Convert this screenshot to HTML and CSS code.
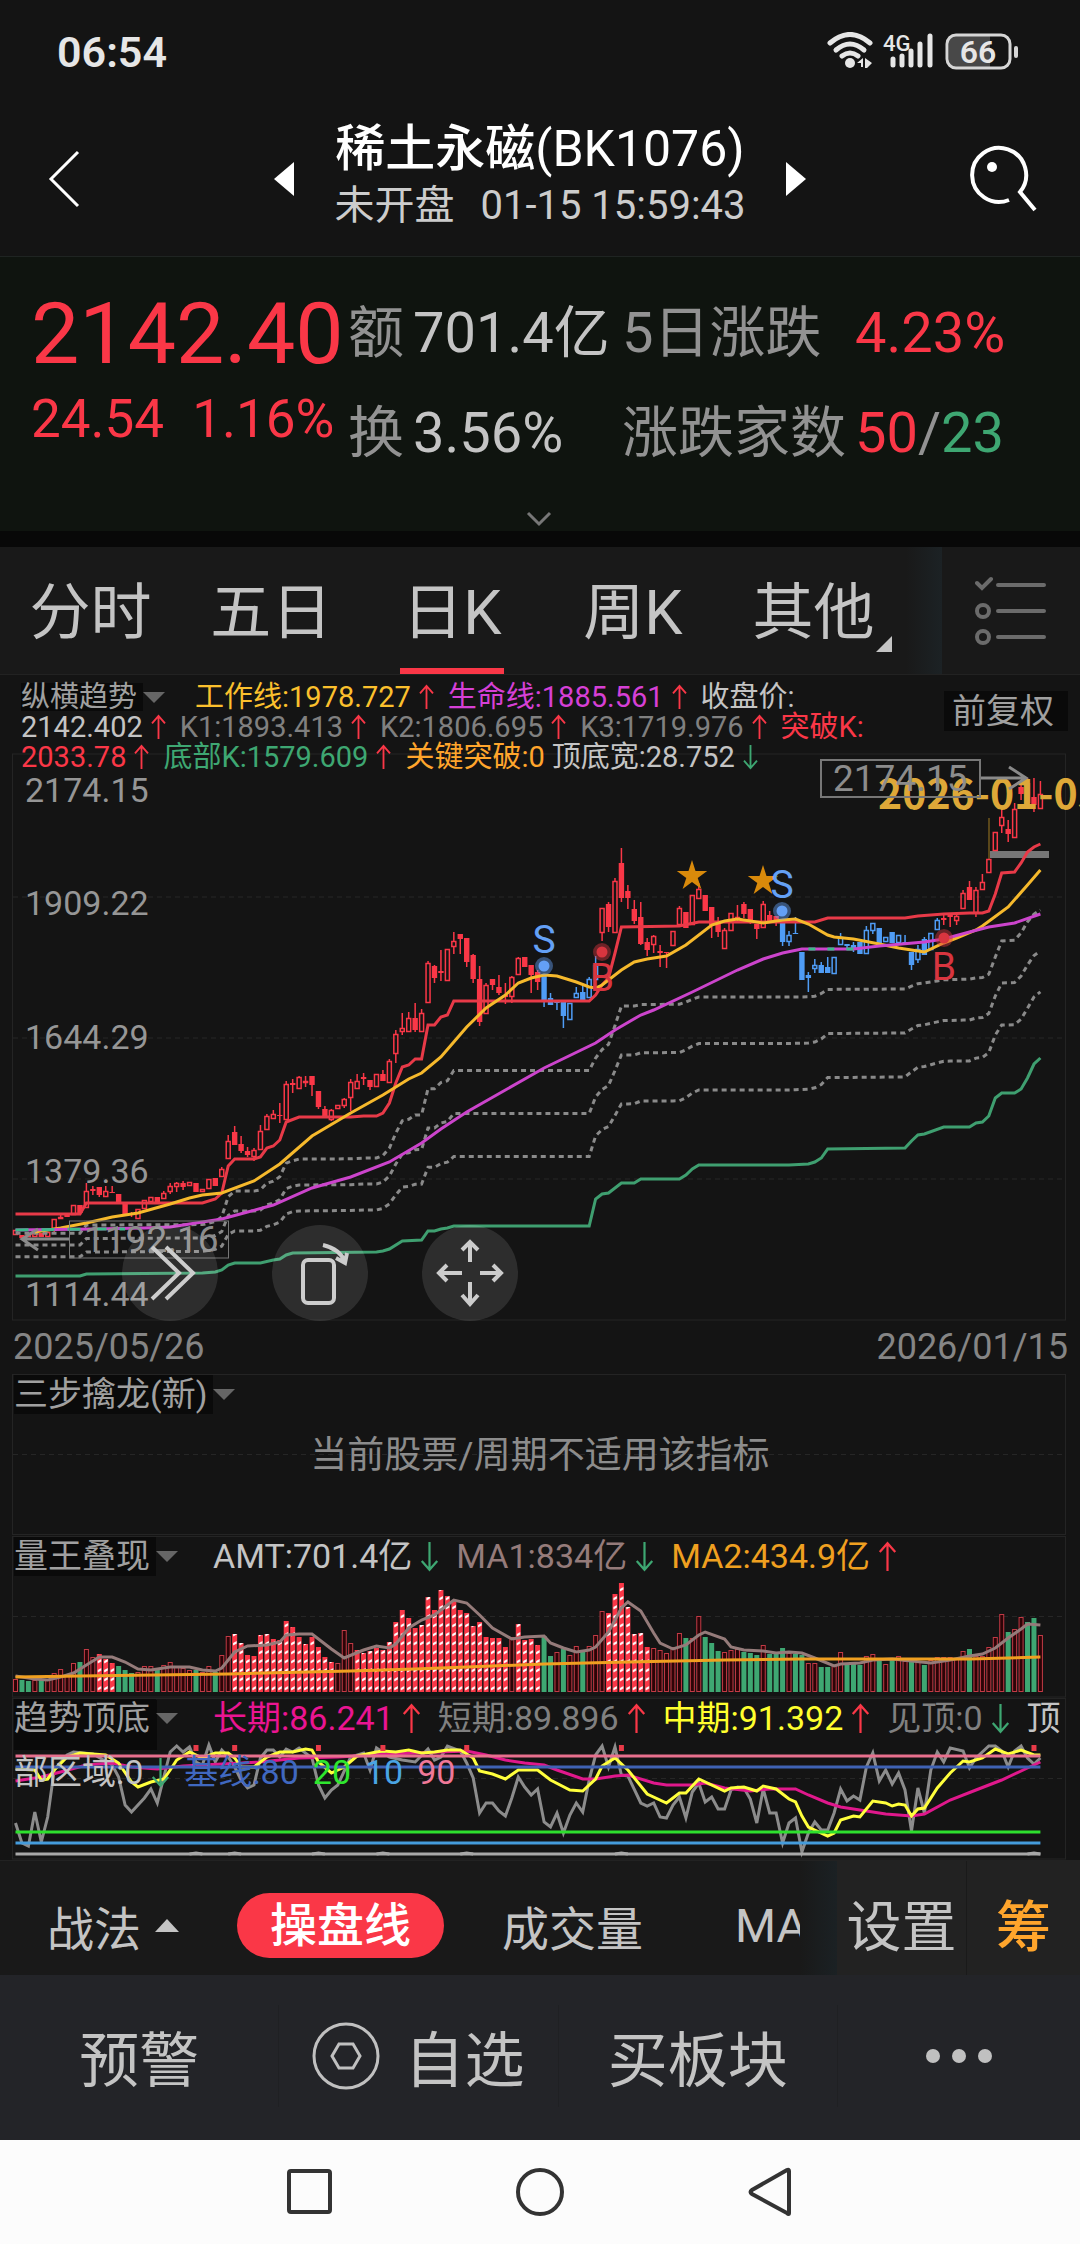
FILE: index.html
```html
<!DOCTYPE html>
<html lang="zh-CN">
<head>
    <meta charset="UTF-8">
    <meta name="viewport" content="width=device-width, initial-scale=1.0">
    <title>稀土永磁(BK1076)</title>
    <link rel="stylesheet" href="styles.css">
</head>
<body>
    <svg class="defs" width="0" height="0">
        <symbol id="up" viewBox="0 0 16 28"><path d="M8 27V3M1 10L8 2L15 10" fill="none" stroke="#fa3747" stroke-width="2"/></symbol>
        <symbol id="down" viewBox="0 0 16 28"><path d="M8 1V25M1 18L8 26L15 18" fill="none" stroke="#3ea772" stroke-width="2"/></symbol>
    </svg>

    <div class="status">
        <span class="clock">06:54</span>
        <svg width="192" height="40" viewBox="0 0 192 40">
            <g fill="none" stroke="#e6e6e6" stroke-width="5" stroke-linecap="round">
                <path d="M3 11Q23 -6 43 11"/>
                <path d="M9 18Q23 6 37 18"/>
                <path d="M15 24Q23 18 31 24"/>
            </g>
            <circle cx="23" cy="31" r="5" fill="#e6e6e6"/>
            <path d="M30 31l6-5v9h-2v-4zM38 26l7 5l-5 5h-2z" fill="#e6e6e6"/>
            <text class="net" x="56" y="19">4G</text>
            <g stroke="#e6e6e6" stroke-width="5" stroke-linecap="round">
                <path d="M66 27v6M75 24v9M84 19v14M93 12v21M103 4v29"/>
            </g>
            <rect x="122" y="4" width="41" height="31" fill="#484848"/>
            <rect x="120" y="3" width="63" height="33" rx="9" fill="none" stroke="#d6d6d6" stroke-width="3"/>
            <path d="M189 16v8" stroke="#d6d6d6" stroke-width="4" stroke-linecap="round"/>
            <text class="battery" x="151" y="31" text-anchor="middle">66</text>
        </svg>
    </div>

    <header class="title-bar">
        <button class="icon-btn" aria-label="返回">
            <svg width="36" height="60" viewBox="0 0 36 60"><path d="M32 3L5 30L32 57" fill="none" stroke="#fff" stroke-width="3"/></svg>
        </button>
        <div class="switcher">
            <button class="icon-btn" aria-label="上一个"><svg width="20" height="34"><path d="M20 0V34L0 17Z" fill="#fff"/></svg></button>
            <div class="name">
                <h1><b>稀土永磁</b>(BK1076)</h1>
                <p><span>未开盘</span><span>01-15 15:59:43</span></p>
            </div>
            <button class="icon-btn" aria-label="下一个"><svg width="20" height="34"><path d="M0 0V34L20 17Z" fill="#fff"/></svg></button>
        </div>
        <button class="icon-btn" aria-label="搜索">
            <svg width="68" height="68" viewBox="0 0 68 68">
                <path d="M39 55A27 27 0 1 1 50 47L65 65" fill="none" stroke="#fff" stroke-width="4"/>
                <circle cx="22" cy="22" r="5" fill="#fff"/>
            </svg>
        </button>
    </header>

    <section class="quote">
        <div class="price">
            <strong>2142.40</strong>
            <p><span>24.54</span><span>1.16%</span></p>
        </div>
        <dl class="stats">
            <dt>额</dt><dd>701.4亿</dd>
            <dt>5日涨跌</dt><dd class="red">4.23%</dd>
            <dt>换</dt><dd>3.56%</dd>
            <dt>涨跌家数</dt><dd><span class="red">50</span><span class="slash">/</span><span class="green">23</span></dd>
        </dl>
        <button class="expand" aria-label="展开">
            <svg width="26" height="16"><path d="M2 2L13 13L24 2" fill="none" stroke="#777" stroke-width="3"/></svg>
        </button>
    </section>

    <nav class="tabs">
        <div class="tab-list">
            <button>分时</button>
            <button>五日</button>
            <button class="active">日K</button>
            <button>周K</button>
            <button class="more">其他</button>
        </div>
        <button class="list-btn" aria-label="指标列表">
            <svg width="72" height="70" viewBox="0 0 72 70" fill="none" stroke="#6b6b6b" stroke-width="4" stroke-linecap="round">
                <path d="M23 9H69M23 35H69M23 61H69"/>
                <path d="M2 7L7 12L16 3"/>
                <circle cx="8" cy="35" r="6"/>
                <circle cx="8" cy="61" r="6"/>
            </svg>
        </button>
    </nav>

    <main>
        <section class="k-chart">
            <div class="legend">
                <div class="line">
                    <button class="indicator">纵横趋势</button>
                    <span class="gold">工作线:1978.727<svg><use href="#up"/></svg></span>
                    <span class="purple">生命线:1885.561<svg><use href="#up"/></svg></span>
                    <span>收盘价:</span>
                </div>
                <div class="line">
                    <span>2142.402<svg><use href="#up"/></svg></span>
                    <span class="dim">K1:1893.413<svg><use href="#up"/></svg></span>
                    <span class="dim">K2:1806.695<svg><use href="#up"/></svg></span>
                    <span class="dim">K3:1719.976<svg><use href="#up"/></svg></span>
                    <span class="red">突破K:</span>
                </div>
                <div class="line">
                    <span class="red">2033.78<svg><use href="#up"/></svg></span>
                    <span class="green">底部K:1579.609<svg><use href="#up"/></svg></span>
                    <span class="orange flat">关键突破:0</span>
                    <span>顶底宽:28.752<svg><use href="#down"/></svg></span>
                </div>
            </div>
            <button class="adjust">前复权</button>
            <svg class="plot" id="kline" viewBox="0 0 1080 574"></svg>
            <div class="dates"><span>2025/05/26</span><span>2026/01/15</span></div>
            <div class="tools">
                <button aria-label="收起">
                    <svg width="96" height="96" viewBox="0 0 96 96"><path d="M30 22L57 48L30 74M44 22L71 48L44 74"/></svg>
                </button>
                <button aria-label="横屏">
                    <svg width="96" height="96" viewBox="0 0 96 96"><rect x="31" y="35" width="31" height="43" rx="5"/><path d="M51 20Q68 24 73 37M64 33L73 38L75 28"/></svg>
                </button>
                <button aria-label="移动">
                    <svg width="96" height="96" viewBox="0 0 96 96"><path d="M48 37V17M40 25L48 17L56 25M48 57V79M40 70L48 79L56 70M40 48H17M25 40L17 48L25 56M58 48H79M71 40L79 48L71 56"/></svg>
                </button>
            </div>
        </section>

        <section class="panel">
            <svg class="plot" id="dragon" viewBox="0 0 1080 166"></svg>
            <div class="legend big first"><div class="line"><button class="indicator">三步擒龙(新)</button></div></div>
            <p class="empty">当前股票/周期不适用该指标</p>
        </section>

        <section class="panel">
            <svg class="plot" id="volume" viewBox="0 0 1080 162"></svg>
            <div class="legend big">
                <div class="line">
                    <button class="indicator">量王叠现</button>
                    <span>AMT:701.4亿<svg><use href="#down"/></svg></span>
                    <span class="brown">MA1:834亿<svg><use href="#down"/></svg></span>
                    <span class="amber">MA2:434.9亿<svg><use href="#up"/></svg></span>
                </div>
            </div>
        </section>

        <section class="panel">
            <svg class="plot" id="trend" viewBox="0 0 1080 162"></svg>
            <div class="legend big">
                <div class="line">
                    <button class="indicator">趋势顶底</button>
                    <span class="pink">长期:86.241<svg><use href="#up"/></svg></span>
                    <span class="dim">短期:89.896<svg><use href="#up"/></svg></span>
                    <span class="yellow">中期:91.392<svg><use href="#up"/></svg></span>
                    <span class="dim">见顶:0<svg><use href="#down"/></svg></span>
                    <span>顶</span>
                </div>
                <div class="line second">
                    <span>部区域:0<svg><use href="#down"/></svg></span>
                    <span class="blue">基线:80</span>
                    <span class="lime">20</span>
                    <span class="sky">10</span>
                    <span class="rose">90</span>
                </div>
            </div>
        </section>
    </main>

    <div class="sub-bar">
        <div class="scroller">
            <button class="tactic">战法</button>
            <button class="pill">操盘线</button>
            <button>成交量</button>
            <button>MA</button>
        </div>
        <div class="fade"></div>
        <button class="setting">设置</button>
        <button class="chips">筹</button>
    </div>

    <footer class="actions">
        <button>预警</button>
        <button>
            <svg width="68" height="68" viewBox="0 0 68 68" fill="none" stroke="#c0c0c0" stroke-width="3"><circle cx="34" cy="34" r="32"/><path d="M27 22H41L48 34L41 46H27L20 34Z"/></svg>
            自选
        </button>
        <button>买板块</button>
        <button aria-label="更多">
            <svg width="68" height="16" fill="#c0c0c0"><circle cx="8" cy="8" r="7"/><circle cx="34" cy="8" r="7"/><circle cx="60" cy="8" r="7"/></svg>
        </button>
    </footer>

    <div class="system-nav">
        <button aria-label="任务"><svg width="50" height="50"><rect x="4" y="4" width="41" height="41" rx="2"/></svg></button>
        <button aria-label="主页"><svg width="50" height="50"><circle cx="25" cy="25" r="22"/></svg></button>
        <button aria-label="后退"><svg width="50" height="50"><path d="M44 4V46Q44 48 42 46L7 27Q4 25 7 23L42 3Q44 2 44 4Z"/></svg></button>
    </div>

    <script src="script.js"></script>
</body>
</html>
```
FILE: styles.css
```css
* {
    box-sizing: border-box;
}
body {
    margin: 0;
    background: #141414;
    color: #c4c4c4;
    font-family: Roboto, "Noto Sans CJK SC", sans-serif;
    overflow-x: hidden;
}
button {
    border: 0;
    padding: 0;
    margin: 0;
    background: none;
    color: inherit;
    font: inherit;
    cursor: pointer;
}
h1, p, dl, dd {
    margin: 0;
}
svg {
    display: block;
}
.defs {
    position: absolute;
}
.red { color: #fa3747; }
.green { color: #3ea772; }
.gold { color: #fbc02d; }
.purple { color: #d640d6; }
.orange { color: #ffa52c; }
.amber { color: #f0a020; }
.brown { color: #957b7a; }
.pink { color: #ea1592; }
.yellow { color: #ffff2e; }
.blue { color: #4068c0; }
.lime { color: #2ee62e; }
.sky { color: #4aa4e4; }
.rose { color: #f07898; }
.dim { color: #808080; }

/* status bar */
.status {
    display: flex;
    justify-content: space-between;
    align-items: center;
    height: 104px;
    padding: 0 61px 0 57px;
}
.clock {
    color: #e6e6e6;
    font-size: 43px;
    font-weight: 600;
}
.net, .battery {
    fill: #e6e6e6;
    font-size: 22px;
    font-weight: 500;
}
.battery {
    font-size: 32px;
    font-weight: 600;
}

/* title */
.title-bar {
    display: grid;
    grid-template-columns: 1fr 532px 1fr;
    align-items: center;
    height: 153px;
    padding: 0 42px 2px 46px;
    border-bottom: 1px solid #1f2422;
}
.title-bar > :last-child {
    justify-self: end;
}
.switcher {
    display: flex;
    justify-content: space-between;
    align-items: center;
    margin: 0 2px 0 -2px;
}
.name {
    display: flex;
    flex-direction: column;
    align-items: center;
    padding-bottom: 4px;
}
.name h1 {
    color: #fff;
    font-size: 50px;
    font-weight: 400;
    line-height: 58px;
}
.name b {
    font-weight: 500;
}
.name p {
    display: flex;
    gap: 26px;
    color: #ccc;
    font-size: 40px;
    line-height: 56px;
}

/* quote */
.quote {
    display: grid;
    grid-template-columns: 317px 1fr;
    padding: 27px 34px 0 31px;
    height: 274px;
    background: #0f140f;
}
.price {
    color: #fa3747;
}
.price strong {
    display: block;
    font-size: 86px;
    font-weight: 400;
    line-height: 100px;
}
.price p {
    display: flex;
    gap: 28px;
    font-size: 53px;
    line-height: 70px;
}
.stats {
    display: grid;
    grid-template-columns: 65px 209px 233px 1fr;
    font-size: 56px;
    line-height: 98px;
    white-space: nowrap;
}
.stats dt, .slash {
    color: #929292;
}
.expand {
    grid-column: 1 / -1;
    justify-self: center;
    align-self: start;
    margin-top: 26px;
}

/* period tabs */
.tabs {
    display: flex;
    height: 144px;
    border-top: 16px solid #080808;
    border-bottom: 1px solid #222;
    background: #191919;
}
.tab-list {
    display: flex;
    flex: 1;
    padding-right: 38px;
    background: linear-gradient(to left, #1c2225, #191919 36px);
}
.tab-list button {
    position: relative;
    flex: 1;
    font-size: 61px;
    line-height: 132px;
}
.tab-list .active::after {
    content: "";
    position: absolute;
    bottom: 0;
    left: calc(50% - 52px);
    width: 104px;
    height: 6px;
    background: #fa3747;
}
.tab-list .more::after {
    content: "";
    position: absolute;
    right: 12px;
    bottom: 22px;
    border: 8px solid;
    border-color: transparent #c4c4c4 #c4c4c4 transparent;
}
.list-btn {
    width: 138px;
    display: grid;
    place-items: center;
}

/* charts */
.k-chart, .panel {
    position: relative;
}
.plot {
    width: 100%;
    height: auto;
}
.legend {
    position: relative;
    z-index: 1;
    padding: 7px 0 0 21px;
    font-size: 29px;
    white-space: nowrap;
}
.line {
    display: flex;
    align-items: center;
    height: 30px;
    line-height: 30px;
    gap: 14px;
}
.line span {
    display: flex;
    align-items: center;
    gap: 8px;
}
.line span svg {
    width: 15px;
    height: 26px;
}
.line .flat {
    margin-right: -7px;
}
.indicator {
    display: flex;
    align-items: center;
    margin-right: 16px;
    background: linear-gradient(#0a0a0a, #0a0a0a) no-repeat 0 0 / calc(100% - 22px) 100%;
    color: #a0a0a0;
    line-height: 28px;
}
.indicator::after {
    content: "";
    margin-left: 6px;
    border: 11px solid transparent;
    border-top-color: #666;
    border-bottom: 0;
}
.legend + .adjust {
    position: absolute;
    top: 16px;
    right: 12px;
    padding: 0 14px 0 8px;
    background: #0a0a0a;
    color: #a0a0a0;
    font-size: 34px;
    line-height: 40px;
}
#kline {
    margin-top: -22px;
}
.dates {
    display: flex;
    justify-content: space-between;
    padding: 0 12px 0 13px;
    color: #858585;
    font-size: 36px;
    line-height: 46px;
}
.tools {
    position: absolute;
    left: 122px;
    bottom: 49px;
    display: flex;
    gap: 54px;
}
.tools button {
    border-radius: 50%;
    background: rgba(255, 255, 255, 0.11);
}
.tools path, .tools rect {
    fill: none;
    stroke: #ccc;
    stroke-width: 4;
}
.big {
    position: absolute;
    top: 0;
    left: 14px;
    right: 0;
    padding: 0;
    overflow: hidden;
    font-size: 34px;
}
.first {
    top: 4px;
}
.big .line {
    height: 40px;
    line-height: 40px;
    gap: 17px;
}
.big .second {
    margin-top: 14px;
    gap: 14px;
}
.big .line span svg {
    width: 19px;
    height: 31px;
}
.big .indicator {
    line-height: 39px;
    margin-right: 18px;
}
.empty {
    position: absolute;
    top: 58px;
    width: 100%;
    color: #8c8c8c;
    font-size: 37px;
    line-height: 56px;
    text-align: center;
}

/* svg text */
.axis {
    fill: #969696;
    font-size: 34px;
}
.peak {
    fill: #8c8c8c;
    font-size: 37px;
}
.mark {
    font-size: 39px;
    text-anchor: middle;
}
.day {
    fill: #dea838;
    font: bold 41px "Noto Sans CJK SC", sans-serif;
}

/* indicator bar */
.sub-bar {
    display: flex;
    height: 115px;
    border-top: 1px solid #222;
    background: #191919;
    font-size: 47px;
}
.scroller {
    display: flex;
    flex: 1;
    align-items: center;
    gap: 58px;
    overflow: hidden;
    padding: 14px 0 0 47px;
    white-space: nowrap;
}
.scroller > button:last-child {
    margin-left: 34px;
}
.tactic {
    display: flex;
    align-items: center;
    gap: 14px;
}
.tactic::after {
    content: "";
    border: 12px solid transparent;
    border-bottom: 13px solid #c4c4c4;
    border-top: 0;
}
.pill {
    padding: 0 33px;
    border-radius: 33px;
    background: #fa3747;
    color: #fff;
    font-weight: 500;
    line-height: 65px;
}
.fade {
    width: 37px;
    background: linear-gradient(to right, #191919, #1b2124);
}
.setting, .chips {
    width: 129px;
    padding-top: 7px;
    background: #222;
    font-size: 55px;
}
.chips {
    width: 114px;
    border-left: 1px solid #1a1a1a;
    color: #ffa52c;
    font-weight: 500;
}

/* bottom actions */
.actions {
    display: grid;
    grid-template-columns: 3fr 3fr 3fr 2.6fr;
    align-items: center;
    height: 165px;
    padding-bottom: 4px;
    background: #232428;
    font-size: 60px;
}
.actions button {
    display: flex;
    justify-content: center;
    align-items: center;
    gap: 24px;
    height: 102px;
    border-right: 1px solid #1f2023;
}
.actions button:last-child {
    border: 0;
}
.system-nav {
    display: flex;
    justify-content: center;
    align-items: center;
    gap: 180px;
    height: 104px;
    background: #fcfcfc;
}
.system-nav svg {
    fill: none;
    stroke: #333;
    stroke-width: 4;
}
```
FILE: script.js
```javascript
const RED = '#fa3747';
const BLUE = '#4f9cf5';
const GREEN = '#3ea772';
const COUNT = 160;
const STEP = 6.446;

const x = i => 15.5 + i * STEP;

// one candle: kind, body top, body bottom, high, low
// h/f = hollow/filled red, B/b = hollow/filled blue
const candles = `h480-485 f485-488 h483-487 h483-487 f483-487 h482-487 h469-479,469,483 h467-469,465 f464-467 h455-465
f455-463 h441-458,433 f439-441,436,445 f437-445,437,447 h441-447,436 f442-443,436 f444-452 f453-464 f463-465,462,467 h459-469
h450-459 h447-452 f447-452 h443-449,441 h436-442,433,444 h433-437,432,442 f433-437,431,440 h432-436 f433-442 h439-442
h429-439 f428-436 h419-427,417 h391-409,385 f382-395,376 f394-401,386,403 f401-405,397,407 h400-407,398,411 h381-400,375 h366-380,364
h364-369,360 f365-366,353,373 h334-370,331 f333-335,329,343 h327-339,326 h331-333,326,337 f326-335,326,346 f341-357,341,359 f359-368,356 h360-370,359,371
h355-359 h349-356,348,358 h332-348,329,361 h331-339,324 f327-329,323,335 f330-337,330,340 h324-337 f324-331,320 h311-333,309 h284-304,280,313
h278-282,263,285 h268-282,262 f268-280,253,282 h263-282,259 h213-253,211 f216-228,215,233 f221-223,200,231 h199-231 h191-197,182,204 f184-189,184,204
f188-212,188,217 f205-229,204,233 f229-272,216,276 h235-264,233 f229-235,229,240 f237-243,225,245 f245-247,233,254 h227-247,226,253 h208-225,207 f207-217
f215-225,215,243 f222-232,220,240 b225-250,225,257 b248-255,243 b250-253,250,260 b252-266,252,278 B253-270 B243-248,237 b242-250,235 B229-248,227
B215-230,206 h158-183,158,191 f154-177,152,182 h131-183,128 f113-148,98,152 f141-148,135,159 f159-171,150,174 f167-194,152,195 f192-200,188,206 h186-195,185,203
f201-203,195,217 f202-203,202,218 h181-196 h158-175,156 f162-178 h145-175 h139-149,133 f145-161 f157-175,157,188 f171-182,167,187
h180-199,178 h163-181 h167-169,155,172 f154-164,152,168 f159-172,159,174 f174-179,174,189 h154-178,151 f165-171,161 f166-170,166,176 b173-192,173,196
B185-192,181,196 b183-184,167 b202-230 b225-228,222,242 B215-219,209,223 b215-223,212 b217-223,207 B207-224 B187-195,183 b194-196,194,199
b195-199,192,202 b192-204 B180-204,176 B173-181,173,184 b178-193 B187-192 b182-193 B185-193 b192-194,185 b202-215,202,220
B199-210,195,213 b189-205,187 B183-200 B170-180,168 f168-170,164,175 f165-167,164,177 h166-171,162,175 h143-159,140 f137-150,131 h140-163,137,167
h132-140,124 h109-123 h82-101 h67-76,59,83 f79-84,70,92 h59-88,53 f37-44,33,50 f33-53,28 f47-55,28,62 h44-59,31`.split(/\s+/);

// polylines are "index,y" pairs
const breakLine = '0,464 10,464 11,453 29,453 31,449 32,443 33,416 34,409 37,409 38,407 39,398 40,396 41,390 42,372 44,367 52,367 54,366 56,366 57,363 58,353 59,333 60,317 61,315 62,309 63,309 64,275 65,275 66,267 67,265 68,251 89,251 90,245 91,235 92,228 93,203 94,177 103,176 106,172 124,172 126,168 138,168 140,166 144,164 148,163 150,163 151,161 152,144 153,123 155,122 156,113 157,102 158,97 159,94';
const bottomLine = '0,526 10,526 11,524 29,523 31,522 32,520 33,515 34,513 38,513 40,510 41,509 42,505 43,503 56,502 57,501 58,499 60,491 63,490 64,481 65,481 66,479 67,478 68,476 89,476 90,449 91,444 92,443 93,438 94,433 96,433 97,429 103,429 104,425 105,419 106,415 120,415 123,414 124,412 125,408 126,399 138,398 139,391 140,385 141,384 144,377 148,377 149,373 150,372 151,366 152,348 153,343 155,343 156,339 157,328 158,314 159,308';
const workLine = '3,482 7,478 11,473 15,467 19,463 24,454 27,448 29,445 32,443 37,431 41,414 46,386 52,363 57,345 61,329 63,323 66,307 68,292 70,277 73,258 76,245 78,233 80,228 82,225 84,226 87,232 89,237 90,238 91,235 92,230 94,220 96,212 98,209 101,206 104,195 108,175 110,171 112,169 116,173 119,170 121,169 123,174 126,185 127,187 130,189 134,194 137,198 139,200 141,202 144,193 146,188 149,180 150,176 154,157 157,135 159,120';
const lifeLine = '0,480 12,479 20,478 24,477 28,473 32,469 36,462 40,455 46,438 52,427 58,412 63,393 66,379 70,362 76,340 82,318 90,293 93,280 97,265 99,260 105,242 112,220 116,209 119,203 122,199 130,199 134,196 141,192 144,189 148,182 151,177 155,173 159,164';

// h = hollow, g = green, s = striped; number is the bar height
const volumes = `h13 g12 g11 h12 g12 h12 h19 h23 h17 h29 g30 h43 h35 s38 s33 s29 g26 g22 g19 h20
h26 h26 g23 h27 h30 h26 h24 h22 g22 h20 h26 g20 h37 h56 s58 s49 s37 s36 s57 s58
s53 s52 s71 s65 s55 s48 s55 s45 s35 s30 h29 h62 h49 s42 s39 s41 s44 s42 s50 s70
s82 s74 s64 s67 s95 s82 s102 s96 s91 s82 s79 s66 s70 s55 s54 s54 s45 h55 s68 s52
s53 s47 g56 g36 h40 g43 h37 h46 g40 h46 h57 h81 s79 s98 s109 s85 s58 s59 s45 h44
h42 h39 h45 h59 g54 h54 h76 g55 g49 g41 h40 h42 h43 g40 g39 g37 h47 g38 g38 g44
h39 g38 g37 h29 h29 g25 g25 h27 h40 g29 g28 g27 h36 h38 g34 h28 g32 h36 h31 g30
h31 g27 h32 h35 h35 h35 h33 h41 g43 h36 h36 h45 h55 h78 g60 h63 h75 g70 g74 h57`.split(/\s+/);
const ma1 = '0,140 3,143 5,144 7,141 9,137 11,129 13,121 15,121 17,126 19,133 21,134 24,131 27,131 29,134 31,135 32,132 34,116 36,110 39,109 41,106 42,99 44,98 46,98 49,113 51,122 54,114 56,110 58,112 59,108 61,92 63,84 65,79 67,69 68,64 70,67 72,79 74,92 77,103 79,101 82,100 83,107 85,112 87,116 89,114 90,111 92,96 93,84 94,72 95,66 97,75 99,97 100,107 102,113 104,109 106,99 107,96 110,103 111,111 113,114 116,115 118,117 120,116 122,117 124,122 127,130 128,128 131,127 133,124 136,123 139,125 142,127 145,124 148,120 150,118 152,112 154,102 156,93 157,88 159,89';
const ma2 = '0,141 10,140 33,138 52,135 62,133 70,131 82,128 95,126 110,124 122,123 148,123 159,121';

const longTerm = '0,83 4,79 7,74 11,67 15,65 18,69 22,71 26,68 32,66 38,64 44,60 50,59 58,56 66,54 70,53 73,57 76,62 79,65 82,67 84,72 88,81 90,81 93,78 95,77 99,85 101,87 105,87 107,85 110,90 114,93 117,91 121,91 123,97 126,105 128,109 132,113 135,116 139,118 141,116 145,102 149,92 153,82 157,70 159,64';
const midTerm = '0,71 3,72 4,82 5,81 6,72 8,59 10,55 12,56 14,57 16,65 18,84 19,89 21,84 23,81 24,72 25,62 27,54 29,60 31,55 33,55 34,60 35,69 37,69 39,59 41,54 43,54 45,51 46,52 47,64 49,75 51,69 53,58 56,54 57,53 59,54 61,52 63,55 65,54 67,52 69,52 71,60 72,73 74,76 76,81 78,72 81,72 83,82 86,92 88,93 90,81 91,68 93,60 95,72 98,96 101,105 103,95 104,95 106,81 110,93 111,90 113,89 115,93 116,88 118,91 120,101 121,104 122,118 123,129 126,138 127,135 128,122 130,118 131,119 133,103 135,105 136,108 137,106 138,107 139,118 140,111 141,110 143,90 145,75 147,63 148,64 150,60 152,51 154,56 156,52 158,57 159,57';
const shortTerm = '0,125 1,145 2,148 3,114 4,144 5,119 6,72 8,57 9,54 12,56 15,67 16,79 17,107 18,114 20,100 21,91 22,105 23,79 24,54 25,48 26,54 27,49 28,64 29,67 30,47 31,64 32,52 33,59 34,69 35,82 36,90 37,87 38,60 39,52 40,52 41,59 42,51 43,54 44,50 46,60 47,87 48,100 49,92 50,87 52,59 54,55 55,72 56,50 58,59 60,62 62,64 64,51 65,62 66,59 67,48 69,53 70,65 71,80 72,115 73,105 74,105 75,113 76,118 77,100 78,79 79,89 80,97 81,91 82,124 83,129 84,115 85,135 86,117 87,105 88,114 89,82 90,57 91,48 92,69 93,49 94,77 95,78 97,105 98,108 99,105 100,119 101,120 102,107 103,99 104,120 105,94 106,85 107,104 108,99 109,111 110,111 111,92 112,89 113,90 114,101 115,125 116,91 117,115 118,115 119,145 120,125 121,120 122,154 123,135 124,124 125,132 126,132 127,115 128,91 129,103 130,98 131,102 132,69 133,55 134,83 135,72 136,86 137,75 138,92 139,133 140,90 141,115 142,72 143,54 144,64 145,50 147,53 148,70 149,60 151,48 152,48 153,53 154,69 155,53 156,48 157,60 158,66 159,60';

function parse(text) {
    return text.split(' ').map(p => p.split(',').map(Number));
}

function line(points, color, extra = '') {
    const pts = points.map(([i, y]) => x(i).toFixed(1) + ',' + y).join(' ');
    return `<polyline points="${pts}" fill="none" stroke="${color}" stroke-width="3" ${extra}/>`;
}

function level(y, color) {
    return line([[0, y], [COUNT - 1, y]], color);
}

function frame(top, bottom, grid) {
    let out = `<rect x="12.5" y="${top}" width="1053" height="${bottom - top}" fill="none" stroke="#242424"/>`;
    grid.forEach(y => {
        out += `<path d="M13 ${y}H1066" stroke="#262626" stroke-dasharray="5 4"/>`;
    });
    return out;
}

function valueAt(points, i) {
    const n = points.findIndex(p => p[0] >= i);
    if (n === 0) return points[0][1];
    const [x0, y0] = points[n - 1];
    const [x1, y1] = points[n];
    return y0 + (y1 - y0) * (i - x0) / (x1 - x0);
}

function drawCandle(text, i) {
    const kind = text[0];
    const [body, high, low] = text.slice(1).split(',');
    const [top, bottom] = body.split('-').map(Number);
    const color = kind.toLowerCase() === 'b' ? BLUE : RED;
    const cx = x(i);
    let out = `<path d="M${cx} ${high || top}V${top}M${cx} ${bottom}V${low || bottom}" stroke="${color}" stroke-width="1.5"/>`;
    if (kind === 'h' || kind === 'B') {
        out += `<rect x="${cx - 2}" y="${top + 0.5}" width="4" height="${bottom - top - 1}" fill="none" stroke="${color}" stroke-width="1.5"/>`;
    } else {
        out += `<rect x="${cx - 2.7}" y="${top}" width="5.4" height="${bottom - top}" fill="${color}"/>`;
    }
    return out;
}

function star(cx, cy) {
    let pts = '';
    for (let k = 0; k < 10; k++) {
        const r = k % 2 ? 6 : 16;
        const a = Math.PI * (k / 5 - 0.5);
        pts += `${(cx + r * Math.cos(a)).toFixed(1)},${(cy + r * Math.sin(a)).toFixed(1)} `;
    }
    return `<polygon points="${pts}" fill="#d98a0b"/>`;
}

function signal(letter, cx, baseline, dotY, color) {
    return `<circle cx="${cx}" cy="${dotY}" r="9" fill="${color}" opacity="0.45"/>
        <circle cx="${cx}" cy="${dotY}" r="5.5" fill="${color}"/>
        <text class="mark" x="${cx}" y="${baseline}" fill="${color}">${letter}</text>`;
}

function renderKline() {
    const top = parse(breakLine);
    const bottom = parse(bottomLine);
    let out = frame(4, 570, [147, 288, 429]);
    [[52, '2174.15'], [165, '1909.22'], [299, '1644.29'], [433, '1379.36'], [556, '1114.44']].forEach(([y, label]) => {
        out += `<text class="axis" x="25" y="${y}">${label}</text>`;
    });
    out += '<rect x="990" y="101" width="59" height="7" fill="#777"/><path d="M989 68V109" stroke="#a07a20"/>';
    out += candles.map(drawCandle).join('');
    // K1 - K3 sit between the break line and the bottom line
    [0.309, 0.5, 0.691].forEach(ratio => {
        const points = [];
        for (let i = 0; i < COUNT; i++) {
            const a = valueAt(top, i);
            points.push([i, (a + (valueAt(bottom, i) - a) * ratio).toFixed(1)]);
        }
        out += line(points, '#8a8a8a', 'stroke-dasharray="5 4"');
    });
    out += line(bottom, '#3f9f70');
    out += line(top, '#e83a48');
    out += line(parse(workLine), '#f6b92c');
    out += line(parse(lifeLine), '#cc44cc');
    out += line([[0, 480], [12, 479], [17, 479]], '#3dbb8a', 'stroke-dasharray="13 13"');
    out += line([[123, 199], [130, 199]], '#3dbb8a', 'stroke-dasharray="7 12"');
    out += star(692, 126) + star(763, 131);
    out += signal('S', 544, 203, 216, '#64a0f5') + signal('S', 782, 148, 161, '#64a0f5');
    out += signal('B', 602, 241, 202, '#d8353f') + signal('B', 944, 230, 188, '#d8353f');
    out += '<text class="day" x="878" y="59">2026-01-05</text>';
    out += '<g fill="none" stroke="#777" stroke-width="2"><rect x="821" y="10" width="159" height="37"/><rect x="69.5" y="471" width="159" height="37" stroke-width="1"/></g>';
    out += '<g fill="none" stroke="#8a8a8a" stroke-width="3"><path d="M981 28H1026M1009 17L1026 28L1009 39"/><path d="M69 489H22M38 479L22 489L38 500"/></g>';
    out += '<text class="peak" x="833" y="41">2174.15</text><text class="peak" x="84" y="502">1192.16</text>';
    document.getElementById('kline').innerHTML = out;
}

function renderVolume() {
    const base = 156;
    let out = `<defs><pattern id="stripe" x="13" y="3" width="${STEP}" height="9" patternUnits="userSpaceOnUse">
        <rect width="${STEP}" height="9" fill="${RED}"/><path d="M1 5L4.5 3V5.5L1 7.5Z" fill="#fff"/></pattern></defs>`;
    out += frame(0.5, 161, [80.5]);
    volumes.forEach((text, i) => {
        const h = Number(text.slice(1));
        const cx = x(i);
        if (text[0] === 'h') {
            out += `<rect x="${cx - 2}" y="${base - h + 0.5}" width="4" height="${h - 1}" fill="#2c0407" stroke="#c23a45"/>`;
        } else {
            out += `<rect x="${cx - 2.5}" y="${base - h}" width="5" height="${h}" fill="${text[0] === 'g' ? GREEN : 'url(#stripe)'}"/>`;
        }
    });
    out += line(parse(ma1), '#957b7a') + line(parse(ma2), '#f0a020');
    document.getElementById('volume').innerHTML = out;
}

function renderTrend() {
    let out = frame(0.5, 161, [80.5]);
    out += '<rect x="14" y="2" width="143" height="50" fill="#0a0a0a"/>';
    out += line(parse(shortTerm), '#8c8c8c');
    out += line(parse(longTerm), '#e0188c');
    out += line(parse(midTerm), '#ffff3c');
    out += level(58, '#e8708e') + level(69, '#3f62b4') + level(134, '#2ee02e') + level(145, '#459cdc') + level(156, '#a8a8a8');
    [28, 34, 47, 57, 70, 94, 158].forEach(i => {
        out += `<rect x="${x(i) - 2.5}" y="47" width="5" height="6" fill="#e83a48"/>`;
        out += line([[i - 1, 156], [i, 155], [i + 1, 156]], '#a8a8a8');
    });
    document.getElementById('trend').innerHTML = out;
}

document.getElementById('dragon').innerHTML = frame(4.5, 164.5, [84.5]);
renderKline();
renderVolume();
renderTrend();
```
